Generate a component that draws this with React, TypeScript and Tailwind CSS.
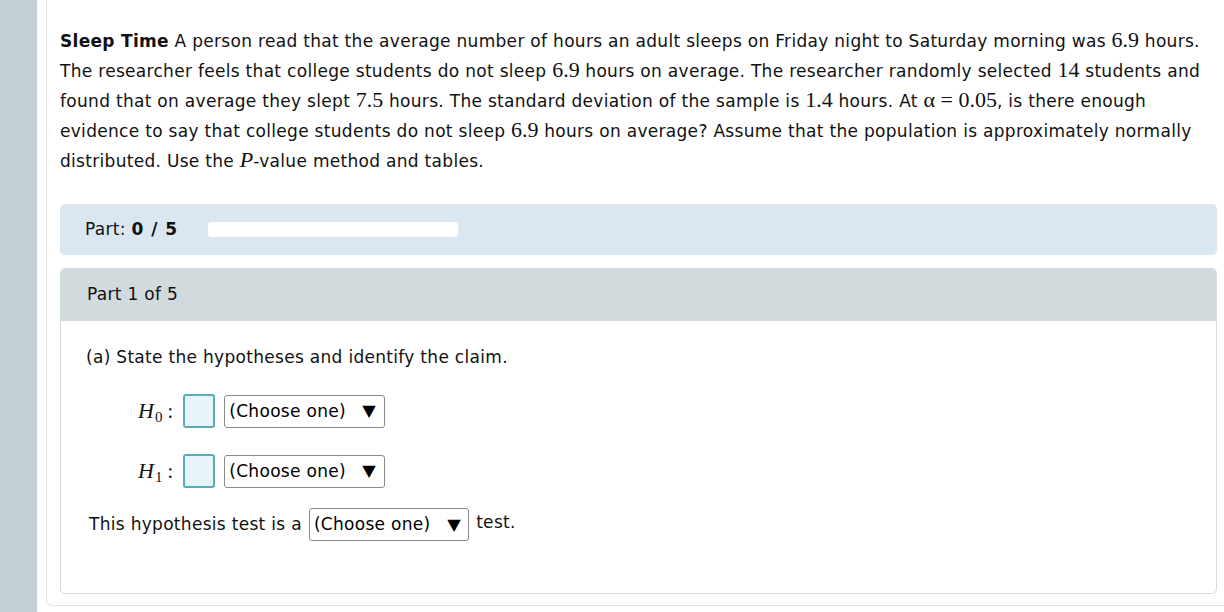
import React from 'react';

const M: React.FC<{ children: React.ReactNode }> = ({ children }) => (
  <span className="font-['Liberation_Serif','DejaVu_Serif',serif] text-[22px] tracking-normal leading-none">{children}</span>
);

const Select: React.FC = () => (
  <span className="inline-flex items-center h-[33px] pl-[4px] pr-[8px] border border-[#8a8a8a] rounded-[3px] bg-white text-black leading-none">
    (Choose one)
    <span className="ml-[17px] text-[16px] scale-x-110">▼</span>
  </span>
);

const AnswerBox: React.FC = () => (
  <span className="inline-block w-[32px] h-[34px] rounded-[3px] border-2 border-[#5aaab8] bg-[#e7f4f8]" />
);

const HRow: React.FC<{ sub: string }> = ({ sub }) => (
  <div className="flex items-center h-[34px] pl-[52px]">
    <span className="font-['Liberation_Serif','DejaVu_Serif',serif] text-[22px] italic tracking-normal leading-none">
      H<sub className="not-italic text-[15px] relative top-[4px] ml-[1px]">{sub}</sub>
    </span>
    <span className="font-['Liberation_Serif',serif] text-[20px] ml-[5px] mr-[10px] leading-none">:</span>
    <AnswerBox />
    <span className="ml-[9px]">
      <Select />
    </span>
  </div>
);

export default function App() {
  return (
    <div className="flex w-[1224px] h-[612px] bg-white overflow-hidden font-['DejaVu_Sans','Verdana',sans-serif] text-[17px] tracking-[0.3px] text-[#111]">
      <div className="w-[37px] shrink-0 bg-[#c3cfd5]" />
      <div className="w-[9px] shrink-0 bg-white" />
      <div className="flex-1 h-[606px] border-l border-b border-[#dde3e5] rounded-bl-[6px] pl-[13px] pr-[7px] pt-[26px]">
        <p className="leading-[30px] w-[1158px]">
          <b>Sleep Time</b> A person read that the average number of hours an adult sleeps on Friday night to Saturday morning was <M>6.9</M> hours. The researcher feels that college students do not sleep <M>6.9</M> hours on average. The researcher randomly selected <M>14</M> students and found that on average they slept <M>7.5</M> hours. The standard deviation of the sample is <M>1.4</M> hours. At <M>α = 0.05</M>, is there enough evidence to say that college students do not sleep <M>6.9</M> hours on average? Assume that the population is approximately normally distributed. Use the <M><i>P</i></M>-value method and tables.
        </p>

        <div className="mt-[28px] w-[1157px] h-[51px] rounded-[5px] bg-[#dae6f0] flex items-center pl-[25px]">
          <span>
            Part: <b className="tracking-[1px]">0 / 5</b>
          </span>
          <div className="ml-[30px] w-[250px] h-[15px] rounded-[3px] bg-white" />
        </div>

        <div className="mt-[13px] w-[1157px] h-[326px] rounded-[5px] border border-[#d3dcdf] flex flex-col overflow-hidden">
          <div className="h-[52px] shrink-0 bg-[#d1dadd] flex items-center pl-[26px]">Part 1 of 5</div>
          <div className="pt-[24px] pl-[25px]">
            <div className="leading-[24px]">(a) State the hypotheses and identify the claim.</div>
            <div className="mt-[25px] flex flex-col gap-[26px]">
              <HRow sub="0" />
              <HRow sub="1" />
            </div>
            <div className="mt-[20px] flex items-center pl-[3px]">
              <span className="mr-[7px]">This hypothesis test is a</span>
              <Select />
              <span className="ml-[7px] -mt-[4px]">test.</span>
            </div>
          </div>
        </div>
      </div>
    </div>
  );
}
